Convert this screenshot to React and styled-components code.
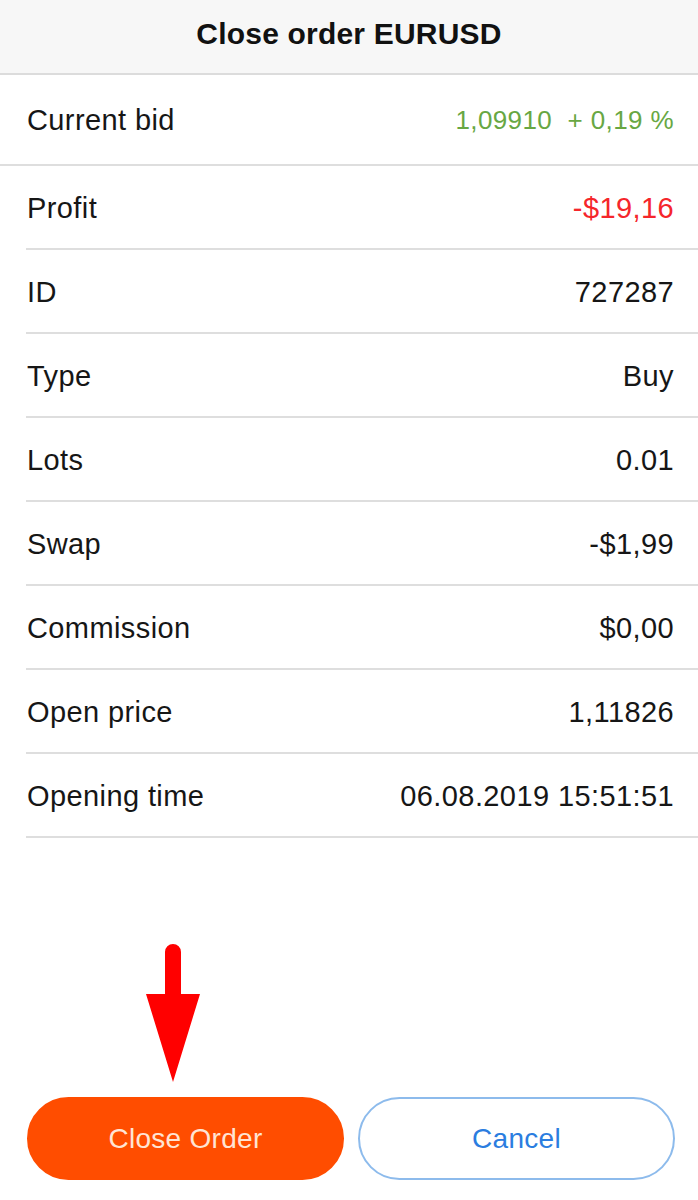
import styled, { createGlobalStyle } from 'styled-components';

const GlobalStyle = createGlobalStyle`
  html, body {
    margin: 0;
    padding: 0;
    background: #ffffff;
  }
  body {
    font-family: "Liberation Sans", Arial, sans-serif;
    color: #111111;
  }
`;

const Screen = styled.div`
  position: relative;
  width: 698px;
  height: 1200px;
  display: flex;
  flex-direction: column;
  background: #ffffff;
  overflow: hidden;
`;

const Header = styled.header`
  height: 75px;
  display: flex;
  align-items: center;
  justify-content: center;
  background: #f7f7f7;
  border-bottom: 2px solid #dcdcdc;
  font-size: 30px;
  font-weight: 700;
  letter-spacing: 0.2px;
  padding-bottom: 6px;
  box-sizing: border-box;
`;

const List = styled.div`
  display: flex;
  flex-direction: column;
`;

const Row = styled.div`
  height: ${({ tall }) => (tall ? '91px' : '84px')};
  margin-left: ${({ full }) => (full ? '0' : '26px')};
  padding: 2px 24px 0 ${({ full }) => (full ? '27px' : '1px')};
  display: flex;
  align-items: center;
  justify-content: space-between;
  border-bottom: 2px solid #dedede;
  box-sizing: border-box;
  font-size: 29px;
  letter-spacing: 0.4px;
`;

const Label = styled.span`
  color: #161616;
`;

const Value = styled.span`
  color: ${({ tone }) =>
    tone === 'up' ? '#68a743' : tone === 'down' ? '#f5262b' : '#161616'};
  font-size: ${({ tone }) => (tone === 'up' ? '26px' : '29px')};
  white-space: pre;
`;

const Spacer = styled.div`
  flex: 1;
`;

const Actions = styled.div`
  display: flex;
  gap: 14px;
  padding: 0 23px 20px 27px;
`;

const Button = styled.button`
  flex: 1;
  height: 83px;
  border-radius: 42px;
  font-family: "Liberation Sans", Arial, sans-serif;
  font-size: 28px;
  letter-spacing: 0.3px;
  cursor: pointer;
  background: ${({ primary }) => (primary ? '#ff4d00' : '#ffffff')};
  color: ${({ primary }) => (primary ? '#ffe4d4' : '#2b7de0')};
  border: 2px solid ${({ primary }) => (primary ? '#ff4d00' : '#8dbbec')};
`;

const Pointer = styled.svg`
  position: absolute;
  left: 144px;
  top: 942px;
`;

const rows = [
  { label: 'Profit', value: '-$19,16', tone: 'down' },
  { label: 'ID', value: '727287' },
  { label: 'Type', value: 'Buy' },
  { label: 'Lots', value: '0.01' },
  { label: 'Swap', value: '-$1,99' },
  { label: 'Commission', value: '$0,00' },
  { label: 'Open price', value: '1,11826' },
  { label: 'Opening time', value: '06.08.2019 15:51:51' },
];

function App() {
  return (
    <Screen>
      <GlobalStyle />
      <Header>Close order EURUSD</Header>
      <List>
        <Row full tall>
          <Label>Current bid</Label>
          <Value tone="up">{'1,09910  + 0,19 %'}</Value>
        </Row>
        {rows.map((r) => (
          <Row key={r.label}>
            <Label>{r.label}</Label>
            <Value tone={r.tone}>{r.value}</Value>
          </Row>
        ))}
      </List>
      <Spacer />
      <Actions>
        <Button primary>Close Order</Button>
        <Button>Cancel</Button>
      </Actions>
      <Pointer width="58" height="142" viewBox="0 0 58 142">
        <path d="M21 10 a8 8 0 0 1 16 0 V52 H56 L29 140 L2 52 H21 Z" fill="#ff0000" />
      </Pointer>
    </Screen>
  );
}

export default App;
